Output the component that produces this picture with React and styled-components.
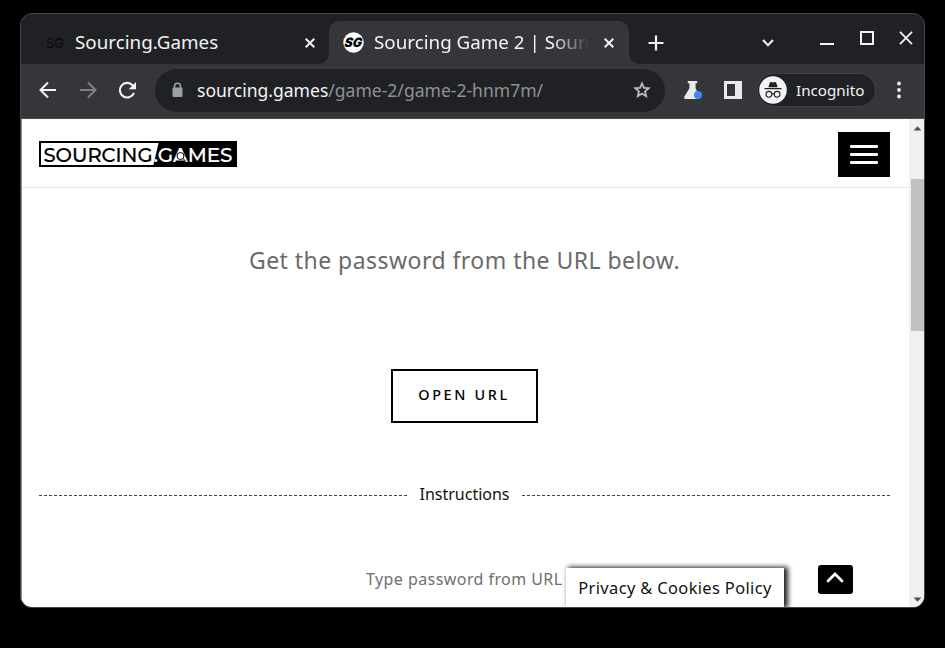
import React from "react";
import styled, { createGlobalStyle } from "styled-components";

const Global = createGlobalStyle`
  *, *::before, *::after { box-sizing: border-box; }
  body { margin: 0; background: #000; font-family: "Noto Sans", sans-serif; }
  button { font-family: inherit; padding: 0; border: 0; background: none; color: inherit; }
  svg { display: block; flex: none; }
`;

const Desktop = styled.div`
  height: 648px;
  overflow: hidden;
  padding: 13px 20px 40px 20px;
  background: #000;
`;

const BrowserWindow = styled.div`
  display: flex;
  flex-direction: column;
  width: 905px;
  height: 595px;
  border: 1px solid #454648;
  border-radius: 12px;
  overflow: hidden;
  background: #202124;
`;

const TabStrip = styled.div`
  display: flex;
  height: 50px;
  flex: none;
  color: #f1f3f4;
`;

const Tab = styled.div`
  display: flex;
  align-items: center;
  position: relative;
  width: ${(p) => (p.$active ? 300 : 308)}px;
  height: ${(p) => (p.$active ? 43 : 50)}px;
  margin-top: ${(p) => (p.$active ? 7 : 0)}px;
  padding: ${(p) => (p.$active ? "0 12px 0 14px" : "7px 11px 0 24px")};
  background: ${(p) => (p.$active ? "#35363a" : "transparent")};
  border-radius: 10px 10px 0 0;

  &::before, &::after {
    content: "";
    display: ${(p) => (p.$active ? "block" : "none")};
    position: absolute;
    bottom: 0;
    width: 10px;
    height: 10px;
  }
  &::before { left: -10px; background: radial-gradient(circle at 0 0, transparent 9.5px, #35363a 10px); }
  &::after { right: -10px; background: radial-gradient(circle at 100% 0, transparent 9.5px, #35363a 10px); }
`;

const TabTitle = styled.span`
  flex: 1;
  min-width: 0;
  margin-left: 10px;
  margin-right: 13px;
  padding-bottom: 2px;
  overflow: hidden;
  white-space: nowrap;
  font-size: 18.8px;
  line-height: 28px;
  ${(p) => p.$fade && "mask-image: linear-gradient(90deg, #000 83%, transparent 101%);"}
`;

const StripButton = styled.button`
  display: grid;
  place-items: center;
  width: ${(p) => p.$w}px;
  height: ${(p) => p.$h || 57}px;
`;

const Spacer = styled.div`
  flex: 1;
`;

const Toolbar = styled.div`
  display: flex;
  align-items: center;
  flex: none;
  height: 55px;
  padding: 0 12px 2px 15px;
  background: #35363a;
  border-bottom: 1px solid #4b4c4f;
  color: #f1f3f4;
`;

const ToolButton = styled.button`
  display: grid;
  place-items: center;
  flex: none;
  width: ${(p) => p.$w || 40}px;
  height: 40px;
`;

const AddressBar = styled.div`
  display: flex;
  align-items: center;
  flex: none;
  width: 510px;
  height: 43px;
  margin-left: 16px;
  padding: 0 13px 0 16px;
  border-radius: 22px;
  background: #202124;
`;

const Address = styled.span`
  flex: 1;
  margin-left: 13px;
  font-size: 17.55px;
  line-height: 26px;
  color: #8f9194;
  white-space: nowrap;
  b { font-weight: 400; color: #f1f3f4; }
`;

const ProfileChip = styled.div`
  display: flex;
  align-items: center;
  width: 119px;
  height: 34px;
  margin-left: 13px;
  padding-left: 1px;
  border: 1px solid #414246;
  border-radius: 17px;
  background: #202124;
  font-size: 15.2px;
  gap: 9px;
`;

const Page = styled.div`
  display: flex;
  flex: 1;
  min-height: 0;
  background: #fff;
  border-left: 1px solid #8a8a8a;
`;

const Document = styled.div`
  position: relative;
  display: flex;
  flex-direction: column;
  flex: 1;
  overflow: hidden;
`;

const SiteHeader = styled.header`
  display: flex;
  align-items: center;
  justify-content: space-between;
  height: 69px;
  flex: none;
  padding: 2px 19px 0 17px;
  border-bottom: 1px solid #e6e6e6;
`;

const MenuButton = styled.button`
  display: flex;
  flex-direction: column;
  align-items: center;
  justify-content: center;
  gap: 5px;
  width: 52px;
  height: 45px;
  background: #000;
`;

const MenuBar = styled.span`
  width: 28px;
  height: 3px;
  border-radius: 1px;
  background: #fff;
`;

const Content = styled.main`
  display: flex;
  flex-direction: column;
  align-items: center;
  padding: 50px 19px 0 17px;
`;

const Lead = styled.p`
  margin: 0;
  font-size: 23px;
  line-height: 44px;
  letter-spacing: 0.46px;
  color: #6a6a6a;
`;

const OpenButton = styled.button`
  width: 147px;
  height: 54px;
  margin-top: 87px;
  border: 2px solid #000;
  font-size: 14.4px;
  font-weight: 550;
  letter-spacing: 2.65px;
  color: #000;
  padding: 0 1px 3px 0;
`;

const Divider = styled.div`
  display: flex;
  align-items: center;
  gap: 12px;
  width: 100%;
  height: 28px;
  margin-top: 57px;
  font-size: 16px;
  color: #111;
`;

const DashedLine = styled.span`
  flex: 1;
  height: 1px;
  margin-top: 3px;
  background: repeating-linear-gradient(90deg, #444 0 3px, transparent 3px 5px);
`;

const Hint = styled.p`
  width: 197px;
  margin: 57px 0 0;
  font-size: 16px;
  line-height: 28px;
  letter-spacing: 0.43px;
  color: #6f6f6f;
  white-space: nowrap;
`;

const PolicyTab = styled.div`
  position: absolute;
  left: 544px;
  bottom: 0;
  width: 218px;
  height: 39px;
  background: #fff;
  box-shadow: 3px 0 5px 1px #222;
  font-size: 16.4px;
  line-height: 40px;
  letter-spacing: 0.38px;
  text-align: center;
  color: #111;
`;

const BackToTop = styled.button`
  position: absolute;
  left: 796px;
  bottom: 13px;
  display: grid;
  place-items: center;
  width: 35px;
  height: 29px;
  padding: 0 1px 5px 0;
  border-radius: 3px;
  background: #000;
`;

const Scrollbar = styled.div`
  display: flex;
  flex-direction: column;
  align-items: center;
  width: 15px;
  padding: 7px 0 5px 2px;
  background: #f0f0f0;
`;

const Thumb = styled.div`
  width: 13px;
  height: 152px;
  margin: 48px 0 auto;
  background: #c1c1c1;
`;

const CloseIcon = ({ size = 10, stroke = 2 }) => (
  <svg width={size} height={size} viewBox="0 0 10 10" stroke="#f1f3f4" strokeWidth={stroke}>
    <path d="M.7.7 9.3 9.3M9.3.7.7 9.3" />
  </svg>
);

const ArrowIcon = ({ color, flip }) => (
  <svg width="18" height="18" viewBox="0 0 18 18" fill="none" stroke={color} strokeWidth="2">
    <path d={flip ? "M1 9h15M9 1.5 16.5 9 9 16.5" : "M17 9H2M9 1.5 1.5 9 9 16.5"} />
  </svg>
);

const ReloadIcon = () => (
  <svg width="19" height="19" viewBox="0 0 19 19" fill="none">
    <path d="M16 11.8A7.3 7.3 0 1 1 14.6 4.3L16 5.8" stroke="#f1f3f4" strokeWidth="2.1" />
    <path d="M18 1v7.3h-7.3z" fill="#f1f3f4" />
  </svg>
);

const LockIcon = () => (
  <svg width="13" height="16" viewBox="0 0 13 16">
    <path d="M3.5 7V4.2a3 3 0 0 1 6 0V7" fill="none" stroke="#9aa0a6" strokeWidth="1.6" />
    <rect x="1.5" y="5.5" width="10" height="9.5" rx="1.3" fill="#9aa0a6" />
  </svg>
);

const StarIcon = () => (
  <svg width="20" height="20" viewBox="0 0 24 24" fill="#c4c7ca">
    <path d="m22 9.24-7.19-.62L12 2 9.19 8.63 2 9.24l5.46 4.73L5.82 21 12 17.27 18.18 21l-1.63-7.03L22 9.24zM12 15.4l-3.76 2.27 1-4.28-3.32-2.88 4.38-.38L12 6.1l1.71 4.04 4.38.38-3.32 2.88 1 4.28L12 15.4z" stroke="#c4c7ca" strokeWidth=".5" />
  </svg>
);

const FlaskIcon = () => (
  <svg width="20" height="20" viewBox="0 0 20 20">
    <path d="M4.8 1h9.4v2.2h-1.600v5l4.200 8.600c.5 1-.1 2.200-1.200 2.200H2.500c-1.100 0-1.700-1.200-1.200-2.200l5.100-8.600v-5H4.800z" fill="#e8eaed" />
    <circle cx="15" cy="15" r="4" fill="#4285f4" />
  </svg>
);

const PanelIcon = () => (
  <svg width="18" height="18" viewBox="0 0 18 18">
    <path d="M0 0h18v18H0zM3 3v12h8V3z" fill="#e8eaed" fillRule="evenodd" />
  </svg>
);

const IncognitoIcon = () => (
  <svg width="28" height="28" viewBox="0 0 28 28" fill="none">
    <circle cx="14" cy="14" r="13.8" fill="#f1f3f4" />
    <path d="M9.300 11.300 10.800 6.800q.3-.9 1.200-.7l2 .4 2-.4q.9-.2 1.200.7l1.500 4.500z" fill="#202124" />
    <path d="M5.500 12.700h17" stroke="#202124" strokeWidth="1.300" />
    <g stroke="#202124" strokeWidth="1.100">
      <circle cx="9.900" cy="18.300" r="2.900" />
      <circle cx="18.100" cy="18.300" r="2.900" />
      <path d="M12.800 18q1.200-.8 2.400 0" />
    </g>
  </svg>
);

const PlainFavicon = () => (
  <svg width="20" height="20" viewBox="0 0 20 20">
    <text x="1" y="14.500" fontFamily="Inter, sans-serif" fontSize="13" textLength="18" lengthAdjust="spacingAndGlyphs" fill="#08090a">SG</text>
  </svg>
);

const RoundFavicon = () => (
  <svg width="21" height="21" viewBox="0 0 21 21">
    <circle cx="10.500" cy="10.500" r="10.200" fill="#fff" />
    <g transform="skewX(-8)">
      <text x="3.200" y="15" fontFamily="Inter, sans-serif" fontSize="13" fontStyle="italic" fontWeight="900" textLength="17.500" lengthAdjust="spacingAndGlyphs" fill="#000">SG</text>
    </g>
  </svg>
);

const Logo = () => (
  <svg width="198" height="26" viewBox="0 0 198 26">
    <rect x="1" y="1" width="196" height="24" fill="#fff" stroke="#000" strokeWidth="2" />
    <path d="M120 0h78v26h-84z" fill="#000" />
    <g fontFamily="Montserrat, Inter, sans-serif" fontSize="19.5" fontWeight="500">
      <text x="4.500" y="20.500" textLength="109" lengthAdjust="spacingAndGlyphs" fill="#000" stroke="#000" strokeWidth=".2">SOURCING</text>
      <text x="114.500" y="20.500" textLength="79" lengthAdjust="spacingAndGlyphs" fill="#fff" stroke="#fff" strokeWidth=".2">.GAMES</text>
    </g>
    <path d="m141.500 8 5.500 11.500h-11z" fill="#fff" />
    <circle cx="141.500" cy="15" r="3.500" fill="#fff" stroke="#000" strokeWidth="1" />
    <path d="m144 17.500 3 3" stroke="#000" strokeWidth="1" />
  </svg>
);

const ScrollArrow = ({ down }) => (
  <svg width="9" height="5" viewBox="0 0 9 5">
    <path d={down ? "M.5 .5h8L4.5 4.8z" : "M.5 4.5h8L4.5 .2z"} fill="#505050" />
  </svg>
);

export default function App() {
  return (
    <Desktop>
      <Global />
      <BrowserWindow>
        <TabStrip>
          <Tab>
            <PlainFavicon />
            <TabTitle>Sourcing.Games</TabTitle>
            <StripButton $w={16} $h={20} aria-label="Close tab"><CloseIcon /></StripButton>
          </Tab>
          <Tab $active>
            <RoundFavicon />
            <TabTitle $fade>Sourcing Game 2 | Sourc</TabTitle>
            <StripButton $w={16} $h={20} aria-label="Close tab"><CloseIcon /></StripButton>
          </Tab>
          <StripButton $w={54} aria-label="New tab">
            <svg width="16" height="16" stroke="#f1f3f4" strokeWidth="2.2"><path d="M8 .5v15M.5 8h15" /></svg>
          </StripButton>
          <Spacer />
          <StripButton $w={80} aria-label="Search tabs">
            <svg width="12" height="8" fill="none" stroke="#f1f3f4" strokeWidth="2"><path d="m1 1 5 5.3L11 1" /></svg>
          </StripButton>
          <StripButton $w={38} $h={60} aria-label="Minimize">
            <svg width="14" height="2"><path d="M0 0h14v2H0z" fill="#f1f3f4" /></svg>
          </StripButton>
          <StripButton $w={42} $h={48} aria-label="Maximize">
            <svg width="14" height="14" fill="none" stroke="#f1f3f4" strokeWidth="2"><path d="M1 1h12v12H1z" /></svg>
          </StripButton>
          <StripButton $w={36} $h={48} aria-label="Close window"><CloseIcon size={14} stroke={1.3} /></StripButton>
        </TabStrip>
        <Toolbar>
          <ToolButton $w={23} aria-label="Back"><ArrowIcon color="#f1f3f4" /></ToolButton>
          <ToolButton $w={57} aria-label="Forward"><ArrowIcon color="#808185" flip /></ToolButton>
          <ToolButton $w={23} aria-label="Reload"><ReloadIcon /></ToolButton>
          <AddressBar>
            <LockIcon />
            <Address><b>sourcing.games</b>/game-2/game-2-hnm7m/</Address>
            <StarIcon />
          </AddressBar>
          <ToolButton $w={56} aria-label="Labs"><FlaskIcon /></ToolButton>
          <ToolButton $w={23} aria-label="Side panel"><PanelIcon /></ToolButton>
          <ProfileChip><IncognitoIcon />Incognito</ProfileChip>
          <Spacer />
          <ToolButton $w={26} aria-label="Menu">
            <svg width="4" height="18" fill="#f1f3f4"><circle cx="2" cy="2.5" r="1.9" /><circle cx="2" cy="9" r="1.9" /><circle cx="2" cy="15.5" r="1.9" /></svg>
          </ToolButton>
        </Toolbar>
        <Page>
          <Document>
            <SiteHeader>
              <Logo />
              <MenuButton aria-label="Menu"><MenuBar /><MenuBar /><MenuBar /></MenuButton>
            </SiteHeader>
            <Content>
              <Lead>Get the password from the URL below.</Lead>
              <OpenButton>OPEN URL</OpenButton>
              <Divider><DashedLine />Instructions<DashedLine /></Divider>
              <Hint>Type password from URL</Hint>
            </Content>
            <PolicyTab>Privacy &amp; Cookies Policy</PolicyTab>
            <BackToTop aria-label="Back to top">
              <svg width="18" height="11" fill="none" stroke="#fff" strokeWidth="2.8" strokeLinecap="round"><path d="m2 9 7-7 7 7" /></svg>
            </BackToTop>
          </Document>
          <Scrollbar>
            <ScrollArrow />
            <Thumb />
            <ScrollArrow down />
          </Scrollbar>
        </Page>
      </BrowserWindow>
    </Desktop>
  );
}
